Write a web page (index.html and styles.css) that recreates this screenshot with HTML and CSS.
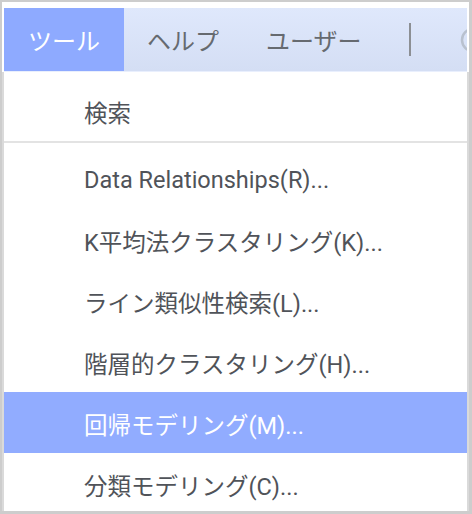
FILE: index.html
```html
<!DOCTYPE html>
<html lang="ja">
<head>
<meta charset="utf-8">
<link rel="stylesheet" href="styles.css">
</head>
<body>
<div class="window">
  <div class="menubar">
    <div class="mb-item active">ツール</div>
    <div class="mb-item help">ヘルプ</div>
    <div class="mb-item user">ユーザー</div>
    <div class="mb-sep"></div>
    <div class="mb-icon">
      <svg width="20" height="30" viewBox="0 0 20 30"><path d="M14 4 A11 11 0 1 0 14 26" fill="none" stroke="#b9c1cf" stroke-width="2.5"/></svg>
    </div>
  </div>
  <div class="dropdown">
    <div class="dd-item first">検索</div>
    <div class="dd-sep"></div>
    <div class="dd-item">Data Relationships(R)...</div>
    <div class="dd-item">K平均法クラスタリング(K)...</div>
    <div class="dd-item">ライン類似性検索(L)...</div>
    <div class="dd-item">階層的クラスタリング(H)...</div>
    <div class="dd-item selected">回帰モデリング(M)...</div>
    <div class="dd-item">分類モデリング(C)...</div>
  </div>
</div>
</body>
</html>
```

FILE: styles.css
```css
html, body {
  margin: 0;
  padding: 0;
  background: #ffffff;
}
body {
  font-family: Roboto, "Noto Sans CJK JP", sans-serif;
}
.window {
  box-sizing: border-box;
  width: 472px;
  height: 514px;
  border: 2px solid #cdcdcd;
  border-right-width: 3px;
  border-bottom-width: 3px;
  background: #ffffff;
  display: flex;
  flex-direction: column;
  overflow: hidden;
}
.menubar {
  margin: 6px 2px 0 2px;
  height: 63px;
  flex: none;
  display: flex;
  align-items: stretch;
  background: linear-gradient(#dfe8fc, #d4def4);
  border-bottom: 1px solid #e9effd;
  overflow: hidden;
}
.mb-item {
  display: flex;
  align-items: center;
  font-size: 24px;
  color: #666a70;
  white-space: nowrap;
  flex: none;
}
.mb-item.active {
  width: 120px;
  justify-content: center;
  background: #8eaaff;
  color: #ffffff;
}
.mb-item.help {
  margin-left: 23px;
}
.mb-item.user {
  margin-left: 47px;
}
.mb-sep {
  width: 2px;
  flex: none;
  background: #8c8f94;
  margin: 15px 0 15px 47px;
}
.mb-icon {
  margin-left: 48px;
  flex: none;
  display: flex;
  align-items: center;
}
.dropdown {
  flex: 1;
  border-left: 2px solid #dadada;
  border-right: 2px solid #dadada;
  padding-top: 8px;
  display: flex;
  flex-direction: column;
}
.dd-item {
  height: 61px;
  box-sizing: border-box;
  padding: 3px 0 0 80px;
  display: flex;
  align-items: center;
  font-size: 23.5px;
  color: #505359;
  white-space: nowrap;
  flex: none;
}
.dd-sep {
  height: 2px;
  background: #e3e3e3;
  margin-bottom: 5px;
  flex: none;
}
.dd-item.selected {
  background: #91acff;
  color: #ffffff;
}
```
